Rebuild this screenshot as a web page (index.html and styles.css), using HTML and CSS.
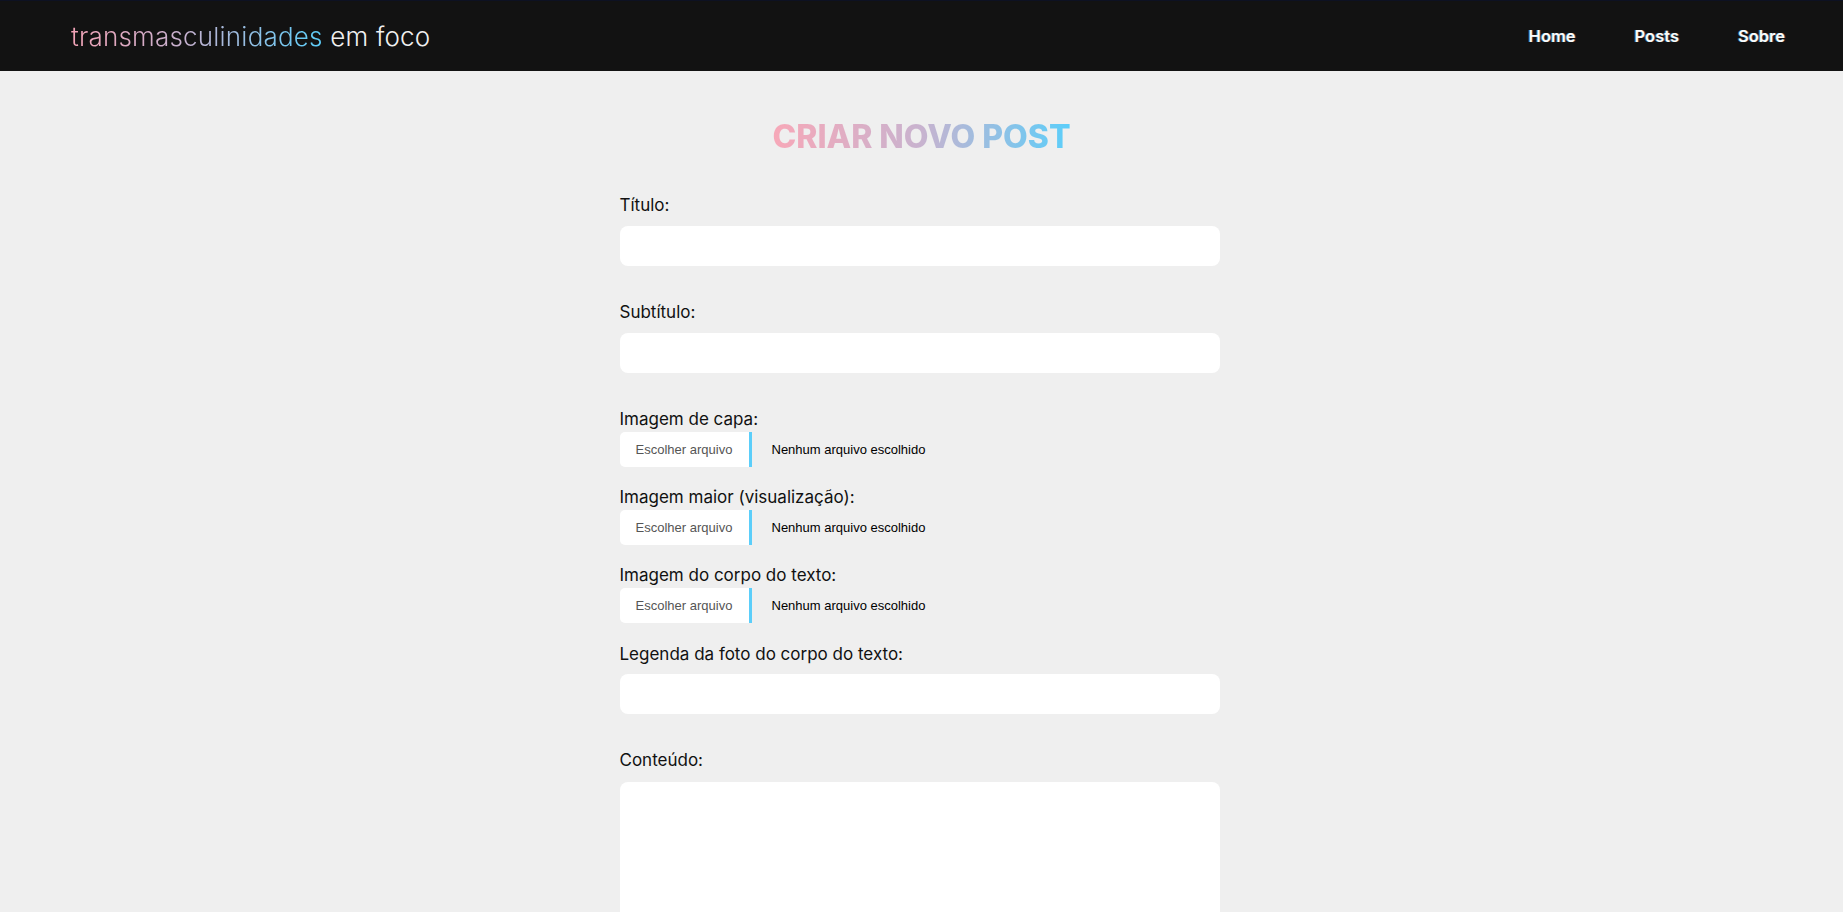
FILE: index.html
```html
<!DOCTYPE html>
<html lang="pt-BR">
<head>
<meta charset="utf-8">
<title>Criar novo post</title>
<link rel="stylesheet" href="styles.css">
</head>
<body>
<header class="topbar">
  <div class="logo"><span class="logo-grad">transmasculinidades</span> em foco</div>
  <nav class="nav">
    <a class="nav-link" href="#">Home</a>
    <a class="nav-link" href="#">Posts</a>
    <a class="nav-link" href="#">Sobre</a>
  </nav>
</header>
<main class="page">
  <h1 class="page-title">CRIAR NOVO POST</h1>
  <form class="post-form">
    <div class="field">
      <label class="field-label">Título:</label>
      <input class="text-input" type="text">
    </div>
    <div class="field">
      <label class="field-label">Subtítulo:</label>
      <input class="text-input" type="text">
    </div>
    <div class="file-field">
      <label class="field-label file-label">Imagem de capa:</label>
      <div class="file-row"><span class="file-btn">Escolher arquivo</span><span class="file-name">Nenhum arquivo escolhido</span></div>
    </div>
    <div class="file-field">
      <label class="field-label file-label">Imagem maior (visualização):</label>
      <div class="file-row"><span class="file-btn">Escolher arquivo</span><span class="file-name">Nenhum arquivo escolhido</span></div>
    </div>
    <div class="file-field file-field-last">
      <label class="field-label file-label">Imagem do corpo do texto:</label>
      <div class="file-row"><span class="file-btn">Escolher arquivo</span><span class="file-name">Nenhum arquivo escolhido</span></div>
    </div>
    <div class="field">
      <label class="field-label field-label-tight">Legenda da foto do corpo do texto:</label>
      <input class="text-input" type="text">
    </div>
    <div class="field">
      <label class="field-label field-label-wide">Conteúdo:</label>
      <textarea class="text-area"></textarea>
    </div>
  </form>
</main>
</body>
</html>
```
FILE: styles.css
```css
* { box-sizing: border-box; }
html, body { margin: 0; padding: 0; }
body {
  background: #efefef;
  font-family: Inter, "Open Sans", sans-serif;
  color: #111;
}
.topbar {
  height: 71px;
  border-top: 1px solid #0d1122;
  background: #121212;
  display: flex;
  align-items: center;
  justify-content: space-between;
  padding: 0 58px 0 71px;
}
.logo {
  font-size: 26px;
  font-weight: 300;
  color: #f0f0f0;
  letter-spacing: 0.2px;
}
.logo-grad {
  background: linear-gradient(90deg, #f2a3b6 0%, #c6b1cf 45%, #5bcefa 100%);
  -webkit-background-clip: text;
  background-clip: text;
  color: transparent;
}
.nav { display: flex; gap: 59px; }
.nav-link {
  color: #fafafa;
  text-decoration: none;
  font-size: 16.5px;
  font-weight: 600;
  text-shadow: -1px 0 rgba(91, 206, 250, 0.5), 1px 0 rgba(245, 169, 184, 0.3);
}
.page { padding-top: 46px; }
.page-title {
  display: block;
  width: max-content;
  margin: 0 auto;
  font-size: 32px;
  line-height: 40px;
  font-weight: 800;
  background: linear-gradient(90deg, #f7a8b8 0%, #c8b3cf 50%, #5bcefa 100%);
  -webkit-background-clip: text;
  background-clip: text;
  color: transparent;
}
.post-form {
  width: 604px;
  padding-right: 4px;
  margin: 38px auto 0;
}
.field { margin-bottom: 36px; }
.field-label {
  display: block;
  font-size: 17px;
  line-height: 20px;
  margin-bottom: 11px;
  color: #111;
}
.field-label-tight { margin-bottom: 10px; }
.field-label-wide { margin-bottom: 12px; }
.file-label { margin-bottom: 3px; }
.text-input {
  display: block;
  width: 100%;
  height: 40px;
  border: none;
  border-radius: 8px;
  background: #fff;
  padding: 0 12px;
  font: inherit;
}
.text-area {
  display: block;
  width: 100%;
  height: 300px;
  border: none;
  border-radius: 8px;
  background: #fff;
  resize: none;
  font: inherit;
}
.file-field { margin-bottom: 20px; }
.file-field-last { margin-bottom: 21px; }
.file-row {
  display: flex;
  align-items: center;
  height: 35px;
}
.file-btn {
  display: flex;
  align-items: center;
  justify-content: center;
  width: 132px;
  height: 35px;
  background: #fff;
  border-right: 3px solid #5bcefa;
  border-radius: 5px 0 0 5px;
  font-family: "Liberation Sans", Arial, sans-serif;
  font-size: 13px;
  color: #555;
}
.file-name {
  margin-left: 20px;
  font-family: "Liberation Sans", Arial, sans-serif;
  font-size: 13px;
  color: #000;
}
```
